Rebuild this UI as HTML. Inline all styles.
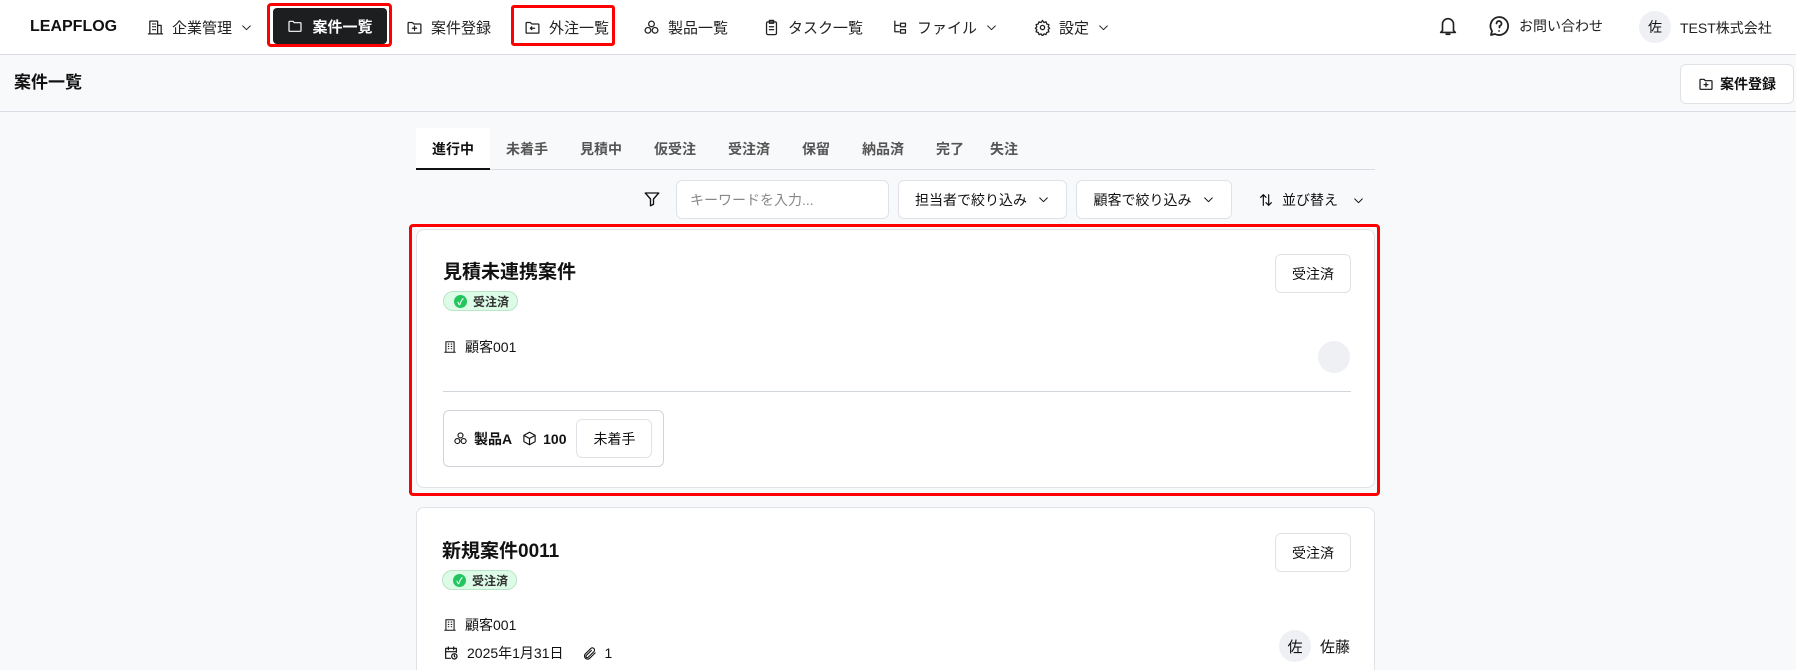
<!DOCTYPE html>
<html style="width:1796px;height:670px;overflow:hidden"><head><meta charset="utf-8"><style>
*{box-sizing:border-box;margin:0;padding:0}
body{width:1796px;height:670px;overflow:hidden;background:#f8f9fa;font-family:"Liberation Sans","Noto Sans CJK JP",sans-serif;color:#111;position:relative;font-size:15px}
.a{position:absolute}
.nav{left:0;top:0;width:1796px;height:55px;background:#fff;border-bottom:1px solid #d9dde3}
.ni{position:absolute;top:17px;display:flex;align-items:center;gap:8px;font-size:15px;color:#222;white-space:nowrap}
svg{fill:none;stroke:currentColor;stroke-width:1.8;stroke-linecap:round;stroke-linejoin:round}
.hdr{left:0;top:55px;width:1796px;height:57px;border-bottom:1px solid #d9dde3;background:#f8f9fa}
.btn{position:absolute;background:#fff;border:1px solid #dfe3e8;border-radius:6px;display:flex;align-items:center;justify-content:center;gap:6px;font-size:15px}
.card{position:absolute;left:416px;width:959px;background:#fff;border:1px solid #dfe3e8;border-radius:8px}
.badge{position:absolute;height:20px;border:1px solid #b8e6c6;background:#dcfce7;border-radius:10px;display:flex;align-items:center;gap:6px;padding:0 8px 0 10px;font-size:12px;font-weight:bold;color:#333}
.dot{width:13px;height:13px;border-radius:50%;background:#22c55e;color:#fff;font-size:9px;display:flex;align-items:center;justify-content:center}
</style></head><body>
<div class="a nav">
 <div class="ni" style="left:30px;top:18px;font-weight:bold;font-size:16px;color:#111">LEAPFLOG</div>
 <div class="ni" style="left:147px"><svg width="17" height="17" viewBox="0 0 24 24"><path d="M4 21V3h11v18M15 9h5v12M2 21h20M8 7h1M11 7h1M8 11h1M11 11h1M8 15h1M11 15h1"/></svg>企業管理<svg width="13" height="13" viewBox="0 0 24 24"><path d="M5 9l7 7 7-7"/></svg></div>
 <div class="a" style="left:267px;top:3px;width:125px;height:44px;border:3px solid #f00;border-radius:4px"></div>
 <div class="a" style="left:273px;top:8px;width:114px;height:36px;background:#1c1e20;border-radius:4px;color:#fff;display:flex;align-items:center;justify-content:center;gap:9px;font-weight:bold;font-size:15px"><svg width="16" height="16" viewBox="0 0 24 24"><path d="M3 6a1 1 0 0 1 1-1h5l2 2h9a1 1 0 0 1 1 1v11a1 1 0 0 1-1 1H4a1 1 0 0 1-1-1z"/></svg>案件一覧</div>
 <div class="ni" style="left:406px"><svg width="17" height="17" viewBox="0 0 24 24"><path d="M3 6a1 1 0 0 1 1-1h5l2 2h9a1 1 0 0 1 1 1v11a1 1 0 0 1-1 1H4a1 1 0 0 1-1-1zM12 10v6M9 13h6"/></svg>案件登録</div>
 <div class="a" style="left:511px;top:5px;width:104px;height:41px;border:3px solid #f00;border-radius:3px"></div>
 <div class="ni" style="left:524px"><svg width="17" height="17" viewBox="0 0 24 24"><path d="M3 6a1 1 0 0 1 1-1h5l2 2h9a1 1 0 0 1 1 1v11a1 1 0 0 1-1 1H4a1 1 0 0 1-1-1zM15 13H9M11 11l-2 2 2 2"/></svg>外注一覧</div>
 <div class="ni" style="left:643px"><svg width="17" height="17" viewBox="0 0 24 24"><circle cx="12" cy="7" r="4"/><circle cx="7" cy="16" r="4"/><circle cx="17" cy="16" r="4"/></svg>製品一覧</div>
 <div class="ni" style="left:763px"><svg width="17" height="17" viewBox="0 0 24 24"><rect x="5" y="4" width="14" height="18" rx="2"/><path d="M9 2h6v4H9zM9 11h6M9 15h6"/></svg>タスク一覧</div>
 <div class="ni" style="left:892px"><svg width="17" height="17" viewBox="0 0 24 24"><path d="M4 3v15h6M4 9h6M12 6h7v5h-7zM12 15h7v5h-7z"/></svg>ファイル<svg width="13" height="13" viewBox="0 0 24 24"><path d="M5 9l7 7 7-7"/></svg></div>
 <div class="ni" style="left:1034px"><svg width="17" height="17" viewBox="0 0 24 24"><circle cx="12" cy="12" r="3"/><path d="M12 2l2 3 3-1 1 3 3 1-1 3 2 2-2 2 1 3-3 1-1 3-3-1-2 3-2-3-3 1-1-3-3-1 1-3-2-2 2-2-1-3 3-1 1-3 3 1z"/></svg>設定<svg width="13" height="13" viewBox="0 0 24 24"><path d="M5 9l7 7 7-7"/></svg></div>
 <div class="ni" style="left:1437px;top:14px"><svg width="22" height="24" viewBox="0 0 24 24"><path d="M6 17V10a6 6 0 0 1 12 0v7l2 2H4zM10 21h4"/></svg></div>
 <div class="ni" style="left:1487px;top:14px"><svg width="24" height="24" viewBox="0 0 24 24"><path d="M12 3a9 9 0 1 1-4 17l-4 1 1-4A9 9 0 0 1 12 3zM9.5 9.5a2.5 2.5 0 1 1 3 2.5v1.5M12 17h.01"/></svg><span style="font-size:14px">お問い合わせ</span></div>
 <div class="a" style="left:1639px;top:11px;width:32px;height:32px;border-radius:50%;background:#eef0f4;display:flex;align-items:center;justify-content:center;font-size:14px">佐</div>
 <div class="ni" style="left:1680px;top:18px;font-size:14px">TEST株式会社</div>
</div>
<div class="a hdr"><div class="a" style="left:14px;top:13px;font-weight:bold;font-size:17px">案件一覧</div></div>
<div class="btn" style="left:1680px;top:64px;width:114px;height:40px;font-weight:bold;font-size:14px"><svg width="16" height="16" viewBox="0 0 24 24"><path d="M3 6a1 1 0 0 1 1-1h5l2 2h9a1 1 0 0 1 1 1v11a1 1 0 0 1-1 1H4a1 1 0 0 1-1-1zM12 10v6M9 13h6"/></svg>案件登録</div>

<div class="a" style="left:416px;top:169px;width:959px;height:1px;background:#d9dde3"></div>
<div class="a" style="left:416px;top:128px;width:74px;height:42px;background:#fff;border-bottom:2px solid #111"></div>
<div class="a" style="left:416px;top:139px;display:flex;font-size:14px;color:#555;font-weight:bold">
 <span style="width:74px;text-align:center;color:#111">進行中</span><span style="width:74px;text-align:center">未着手</span><span style="width:74px;text-align:center">見積中</span><span style="width:74px;text-align:center">仮受注</span><span style="width:74px;text-align:center">受注済</span><span style="width:60px;text-align:center">保留</span><span style="width:74px;text-align:center">納品済</span><span style="width:60px;text-align:center">完了</span><span style="width:48px;text-align:center">失注</span>
</div>
<svg class="a" style="left:643px;top:190px" width="18" height="18" viewBox="0 0 24 24"><path d="M3 4h18l-7 8v7l-4 2v-9z"/></svg>
<div class="btn" style="left:676px;top:180px;width:213px;height:39px;justify-content:flex-start;padding-left:13px;color:#888;font-size:14px">キーワードを入力...</div>
<div class="btn" style="left:898px;top:180px;width:169px;height:39px;font-size:14px;gap:10px">担当者で絞り込み<svg width="13" height="13" viewBox="0 0 24 24"><path d="M5 9l7 7 7-7"/></svg></div>
<div class="btn" style="left:1076px;top:180px;width:156px;height:39px;font-size:14px;gap:10px">顧客で絞り込み<svg width="13" height="13" viewBox="0 0 24 24"><path d="M5 9l7 7 7-7"/></svg></div>
<div class="a" style="left:1258px;top:190px;display:flex;align-items:center;gap:8px;font-size:14px"><svg width="16" height="16" viewBox="0 0 24 24"><path d="M8 20V4M4 8l4-4 4 4M16 4v16M12 16l4 4 4-4"/></svg>並び替え<svg width="13" height="13" viewBox="0 0 24 24" style="margin-left:6px"><path d="M5 9l7 7 7-7"/></svg></div>

<div class="a" style="left:409px;top:224px;width:971px;height:272px;border:3px solid #f00;border-radius:4px"></div>
<div class="card" style="top:229px;height:259px">
 <div class="a" style="left:26px;top:27px;font-size:19px;font-weight:bold">見積未連携案件</div>
 <div class="badge" style="left:26px;top:61px"><div class="dot">✓</div>受注済</div>
 <div class="btn" style="left:858px;top:24px;width:76px;height:39px;font-size:14px">受注済</div>
 <div class="a" style="left:26px;top:107px;display:flex;align-items:center;gap:8px;font-size:14px"><svg width="14" height="16" viewBox="0 0 24 24"><path d="M5 21V3h14v18M3 21h18M9 7h1M14 7h1M9 11h1M14 11h1M9 15h1M14 15h1"/></svg>顧客001</div>
 <div class="a" style="left:901px;top:111px;width:32px;height:32px;border-radius:50%;background:#eef0f4"></div>
 <div class="a" style="left:26px;top:161px;width:908px;height:1px;background:#d0d5db"></div>
 <div class="a" style="left:26px;top:180px;width:221px;height:57px;border:1px solid #d0d5db;border-radius:6px;display:flex;align-items:center;padding-left:9px;gap:6px;font-size:14px;font-weight:bold">
  <svg width="15" height="15" viewBox="0 0 24 24"><circle cx="12" cy="7" r="4"/><circle cx="7" cy="16" r="4"/><circle cx="17" cy="16" r="4"/></svg>製品A
  <svg width="15" height="15" viewBox="0 0 24 24" style="margin-left:4px"><path d="M12 2l9 5v10l-9 5-9-5V7zM3 7l9 5 9-5M12 12v10"/></svg>100
  <div style="margin-left:4px;width:76px;height:39px;border:1px solid #dfe3e8;border-radius:6px;display:flex;align-items:center;justify-content:center;font-weight:normal">未着手</div>
 </div>
</div>

<div class="card" style="top:507px;height:170px">
 <div class="a" style="left:25px;top:28px;font-size:19px;font-weight:bold">新規案件0011</div>
 <div class="badge" style="left:25px;top:62px"><div class="dot">✓</div>受注済</div>
 <div class="btn" style="left:858px;top:25px;width:76px;height:39px;font-size:14px">受注済</div>
 <div class="a" style="left:26px;top:107px;display:flex;align-items:center;gap:8px;font-size:14px"><svg width="14" height="16" viewBox="0 0 24 24"><path d="M5 21V3h14v18M3 21h18M9 7h1M14 7h1M9 11h1M14 11h1M9 15h1M14 15h1"/></svg>顧客001</div>
 <div class="a" style="left:26px;top:135px;display:flex;align-items:center;gap:8px;font-size:14px"><svg width="16" height="16" viewBox="0 0 24 24"><path d="M4 5h16v6M4 5v15h7M8 3v4M16 3v4M4 10h16"/><circle cx="17" cy="17" r="4"/><path d="M17 15v2l1 1"/></svg>2025年1月31日<svg width="15" height="15" viewBox="0 0 24 24" style="margin-left:10px"><path d="M21 11l-9 9a5 5 0 0 1-7-7l9-9a3.5 3.5 0 0 1 5 5l-9 9a2 2 0 0 1-3-3l8-8"/></svg>1</div>
 <div class="a" style="left:862px;top:122px;width:32px;height:32px;border-radius:50%;background:#eef0f4;display:flex;align-items:center;justify-content:center;font-size:15px">佐</div>
 <div class="a" style="left:903px;top:128px;font-size:15px">佐藤</div>
</div>
</body></html>
